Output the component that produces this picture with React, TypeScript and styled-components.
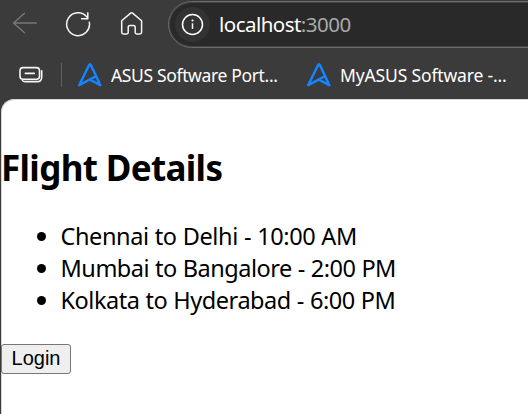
import React from "react";
import styled, { createGlobalStyle } from "styled-components";

const GlobalStyle = createGlobalStyle`
  * { box-sizing: border-box; }
  body { margin: 0; overflow: hidden; background: #3b3b3b; font-family: "Noto Sans", "Open Sans", sans-serif; }
  svg { display: block; flex: none; }
`;

const Browser = styled.div`
  width: 528px;
  height: 414px;
  overflow: hidden;
  display: flex;
  flex-direction: column;
  background: #3b3b3b;
`;

const Toolbar = styled.div`
  display: flex;
  height: 50px;
  flex: none;
  padding: 1px 0 0 12px;
`;

const NavIcons = styled.div`
  display: flex;
  width: 156px;
  flex: none;
  padding-top: 9px;
  gap: 25px;

  & > :last-child { margin-left: 3px; }
`;

const AddressBar = styled.div`
  display: flex;
  align-items: center;
  flex: none;
  width: 400px;
  height: 47px;
  padding-left: 6px;
  border: 1px solid #6b6b6b;
  border-radius: 24px;
  background: #292929;
  box-shadow: inset 0 0 0 1px #444;
`;

const SiteInfo = styled.span`
  display: grid;
  place-items: center;
  width: 35px;
  height: 35px;
  border-radius: 50%;
  background: #333;
`;

const Line = styled.span<{ $spacing: number; $words?: number }>`
  white-space: nowrap;
  letter-spacing: ${(p) => p.$spacing}px;
  word-spacing: ${(p) => p.$words ?? 0}px;
`;

const Url = styled(Line)`
  margin: -2px 0 0 9px;
  font-size: 20.5px;
  line-height: 28px;
  color: #fff;
`;

const Port = styled.span`
  color: #a9a9a9;
`;

const Bookmarks = styled.div`
  display: flex;
  align-items: center;
  height: 49px;
  flex: none;
  padding-left: 19px;
`;

const Divider = styled.span`
  width: 1px;
  height: 24px;
  margin: 0 15px 0 18px;
  background: #606060;
`;

const Bookmark = styled.div<{ $width: number }>`
  display: flex;
  align-items: center;
  flex: none;
  width: ${(p) => p.$width}px;
  gap: 9px;
  font-size: 17.5px;
  line-height: 26px;
  color: #fff;
`;

const Page = styled.main`
  flex: 1;
  margin-left: 1px;
  border-left: 1px solid #d6d6d6;
  border-top: 1px solid #d6d6d6;
  border-top-left-radius: 13px;
  background: #fff;
  color: #000;
`;

const Heading = styled.h2`
  margin: 44px 0 0 -1px;
  font-size: 35px;
  line-height: 48px;
  font-weight: 700;
`;

const Flights = styled.ul`
  margin: 28px 0 0 -1px;
  padding: 0;
  list-style: none;
`;

const Flight = styled.li`
  display: flex;
  align-items: center;
  height: 32px;
  padding-left: 36px;
  font-size: 23.5px;
  line-height: 32px;

  &::before {
    content: "";
    width: 9px;
    height: 9px;
    margin: 1px 14.5px 0 0;
    border-radius: 50%;
    background: #000;
  }
`;

const LoginButton = styled.button`
  display: block;
  width: 70px;
  height: 30px;
  margin: 28px 0 0 -1px;
  padding: 0 0 1px;
  border: 1px solid #767676;
  border-radius: 3px;
  background: #efefef;
  color: #000;
  font: 20px/25px "Liberation Sans", Arial, sans-serif;
`;

const BackIcon = () => (
  <svg width="25" height="26" viewBox="12 10 25 26" fill="none" stroke="#777" strokeWidth="1.4" strokeLinecap="round" strokeLinejoin="round">
    <path d="M36.5 23H13.5M24.5 13.2 13.5 23l11 9.8" />
  </svg>
);

const ReloadIcon = () => (
  <svg width="29" height="28" viewBox="62 10 29 28" fill="none" stroke="#f5f5f5" strokeWidth="1.5" strokeLinecap="round" strokeLinejoin="round">
    <path d="M89.3 22.2A11.4 11.4 0 1 1 87.2 17.4M87.8 12.7v6h-6.2" />
  </svg>
);

const HomeIcon = () => (
  <svg width="26" height="28" viewBox="119 10 26 28" fill="none" stroke="#f5f5f5" strokeWidth="1.5" strokeLinejoin="round">
    <path d="M121.7 20.8 130.6 13.1q1-.8 2 0l9 7.7v11.4q0 1.7-1.7 1.7h-3.3q-1.4 0-1.4-1.4v-5.2q0-1.8-1.8-1.8h-3.4q-1.8 0-1.8 1.8v5.2q0 1.4-1.4 1.4h-3.4q-1.7 0-1.7-1.7z" />
  </svg>
);

const InfoIcon = () => (
  <svg width="23" height="23" viewBox="0 0 23 23" fill="none" stroke="#fff">
    <circle cx="11.5" cy="11.5" r="10" strokeWidth="1.5" />
    <path d="M11.5 10.3v5.6" strokeWidth="1.5" />
    <circle cx="11.5" cy="7.5" r="1.1" fill="#fff" stroke="none" />
  </svg>
);

const TabsIcon = () => (
  <svg width="24" height="18" viewBox="19 66 24 18" fill="none" stroke="#f5f5f5" strokeWidth="1.6" strokeLinecap="round">
    <rect x="20" y="67.6" width="19.5" height="11.6" rx="3" />
    <path d="M25.3 73.4h9" />
    <path d="M41.7 70.8v6.1q0 4.7-4.7 4.7H25q-1.8 0-2.6-1.2" />
  </svg>
);

const AsusIcon = () => (
  <svg width="25" height="26" viewBox="77 62 25 26" fill="none" stroke="#1683ff" strokeWidth="2.5" strokeLinecap="round" strokeLinejoin="round">
    <path d="M96.2 76.2 90.9 65q-.9-1.7-1.8 0L79.2 85.2 96.2 76.2 100.3 85.2 90.4 79.8" />
  </svg>
);

const flights = [
  { text: "Chennai to Delhi - 10:00 AM", spacing: -0.4, words: 0.4 },
  { text: "Mumbai to Bangalore - 2:00 PM", spacing: -0.48, words: 0.3 },
  { text: "Kolkata to Hyderabad - 6:00 PM", spacing: -0.45, words: 0.3 },
];

const bookmarks = [
  { title: "ASUS Software Port...", width: 229, spacing: -0.35 },
  { title: "MyASUS Software -...", width: 210, spacing: -0.15 },
];

export default function App() {
  return (
    <Browser>
      <GlobalStyle />
      <Toolbar>
        <NavIcons>
          <BackIcon />
          <ReloadIcon />
          <HomeIcon />
        </NavIcons>
        <AddressBar>
          <SiteInfo><InfoIcon /></SiteInfo>
          <Url $spacing={-0.53}>localhost<Port>:3000</Port></Url>
        </AddressBar>
      </Toolbar>
      <Bookmarks>
        <TabsIcon />
        <Divider />
        {bookmarks.map((b) => (
          <Bookmark key={b.title} $width={b.width}>
            <AsusIcon />
            <Line $spacing={b.spacing}>{b.title}</Line>
          </Bookmark>
        ))}
      </Bookmarks>
      <Page>
        <Heading><Line $spacing={-0.65}>Flight Details</Line></Heading>
        <Flights>
          {flights.map((f) => (
            <Flight key={f.text}><Line $spacing={f.spacing} $words={f.words}>{f.text}</Line></Flight>
          ))}
        </Flights>
        <LoginButton>Login</LoginButton>
      </Page>
    </Browser>
  );
}
